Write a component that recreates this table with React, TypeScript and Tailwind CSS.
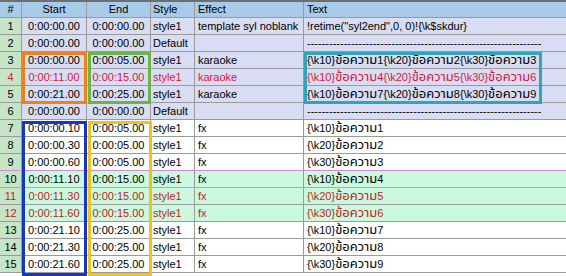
type Row = {
  n: number
  start: string
  end: string
  style: string
  effect: string
  text: string
  bg: string
  color?: string
  pink?: boolean
}

const dash = "----------------------------------------------------------------"

const lav = "bg-[#d8ddf4]"
const mint = "bg-[#cbf9df]"
const white = "bg-white"

const rows: Row[] = [
  { n: 1, start: "0:00:00.00", end: "0:00:00.00", style: "style1", effect: "template syl noblank", text: '!retime("syl2end",0, 0)!{\\k$skdur}', bg: lav },
  { n: 2, start: "0:00:00.00", end: "0:00:00.00", style: "Default", effect: "", text: dash, bg: lav },
  { n: 3, start: "0:00:00.00", end: "0:00:05.00", style: "style1", effect: "karaoke", text: "{\\k10}ข้อความ1{\\k20}ข้อความ2{\\k30}ข้อความ3", bg: lav },
  { n: 4, start: "0:00:11.00", end: "0:00:15.00", style: "style1", effect: "karaoke", text: "{\\k10}ข้อความ4{\\k20}ข้อความ5{\\k30}ข้อความ6", bg: lav, color: "text-[#e0143c]" },
  { n: 5, start: "0:00:21.00", end: "0:00:25.00", style: "style1", effect: "karaoke", text: "{\\k10}ข้อความ7{\\k20}ข้อความ8{\\k30}ข้อความ9", bg: lav },
  { n: 6, start: "0:00:00.00", end: "0:00:00.00", style: "Default", effect: "", text: dash, bg: lav },
  { n: 7, start: "0:00:00.10", end: "0:00:05.00", style: "style1", effect: "fx", text: "{\\k10}ข้อความ1", bg: white },
  { n: 8, start: "0:00:00.30", end: "0:00:05.00", style: "style1", effect: "fx", text: "{\\k20}ข้อความ2", bg: white },
  { n: 9, start: "0:00:00.60", end: "0:00:05.00", style: "style1", effect: "fx", text: "{\\k30}ข้อความ3", bg: white },
  { n: 10, start: "0:00:11.10", end: "0:00:15.00", style: "style1", effect: "fx", text: "{\\k10}ข้อความ4", bg: mint, pink: true },
  { n: 11, start: "0:00:11.30", end: "0:00:15.00", style: "style1", effect: "fx", text: "{\\k20}ข้อความ5", bg: mint, color: "text-[#c01c1c]" },
  { n: 12, start: "0:00:11.60", end: "0:00:15.00", style: "style1", effect: "fx", text: "{\\k30}ข้อความ6", bg: mint, color: "text-[#c01c1c]" },
  { n: 13, start: "0:00:21.10", end: "0:00:25.00", style: "style1", effect: "fx", text: "{\\k10}ข้อความ7", bg: white },
  { n: 14, start: "0:00:21.30", end: "0:00:25.00", style: "style1", effect: "fx", text: "{\\k20}ข้อความ8", bg: white },
  { n: 15, start: "0:00:21.60", end: "0:00:25.00", style: "style1", effect: "fx", text: "{\\k30}ข้อความ9", bg: white },
]

const cell = "h-full border-r border-[#9a9a9a] overflow-hidden whitespace-nowrap flex items-center"

// thai runs render a bit wider in the original font
function SubText({ text }: { text: string }) {
  const parts = text.split(/([\u0E00-\u0E7F]+)/)
  return (
    <span>
      {parts.map((p, i) =>
        /[\u0E00-\u0E7F]/.test(p) ? (
          <span key={i} className="text-[13px] leading-none">{p}</span>
        ) : (
          <span key={i}>{p}</span>
        )
      )}
    </span>
  )
}

export default function App() {
  return (
    <div
      className="relative w-[566px] h-[276px] overflow-hidden bg-white text-[11px] text-black"
      style={{ fontFamily: '"Liberation Sans", Tahoma, "Noto Sans Thai", "Noto Sans", sans-serif' }}
    >
      {/* header */}
      <div className="flex h-[18px] border-t-2 border-[#6e6e6e] border-b border-b-[#9a9a9a] bg-[#a8cbe9]">
        <div className={`${cell} w-[22px] justify-center`}>#</div>
        <div className={`${cell} w-[65px] justify-center`}>Start</div>
        <div className={`${cell} w-[64px] justify-center`}>End</div>
        <div className={`${cell} w-[44px] pl-[2px]`}>Style</div>
        <div className={`${cell} w-[109px] pl-[3px]`}>Effect</div>
        <div className={`${cell} flex-1 pl-[3px] border-r-0`}>Text</div>
      </div>

      {rows.map((r) => (
        <div
          key={r.n}
          className={`flex h-[17px] border-b ${r.pink || r.n === 9 ? "border-[#d48ad4]" : "border-[#9a9a9a]"} ${r.bg} ${r.color ?? ""}`}
        >
          <div className={`${cell} w-[22px] justify-center bg-[#c6e4c6]`}>{r.n}</div>
          <div className={`${cell} w-[65px] justify-center`}>{r.start}</div>
          <div className={`${cell} w-[64px] justify-center`}>{r.end}</div>
          <div className={`${cell} w-[44px] pl-[2px]`}>{r.style}</div>
          <div className={`${cell} w-[109px] pl-[3px]`}>{r.effect}</div>
          <div className={`${cell} flex-1 pl-[3px] border-r-0`}>
            <SubText text={r.text} />
          </div>
        </div>
      ))}

      {/* highlight boxes */}
      <div className="absolute left-[22px] top-[52px] w-[65px] h-[52px] border-[3px] border-[#ee8020]" />
      <div className="absolute left-[88px] top-[52px] w-[63px] h-[52px] border-[3px] border-[#6cb444]" />
      <div className="absolute left-[304px] top-[52px] w-[238px] h-[52px] border-[3px] border-[#2fa6b6]" />
      <div className="absolute left-[22px] top-[121px] w-[65px] h-[155px] border-[3px] border-[#1636c4]" />
      <div className="absolute left-[88px] top-[121px] w-[64px] h-[155px] border-[3px] border-[#f2c21c]" />
    </div>
  )
}
